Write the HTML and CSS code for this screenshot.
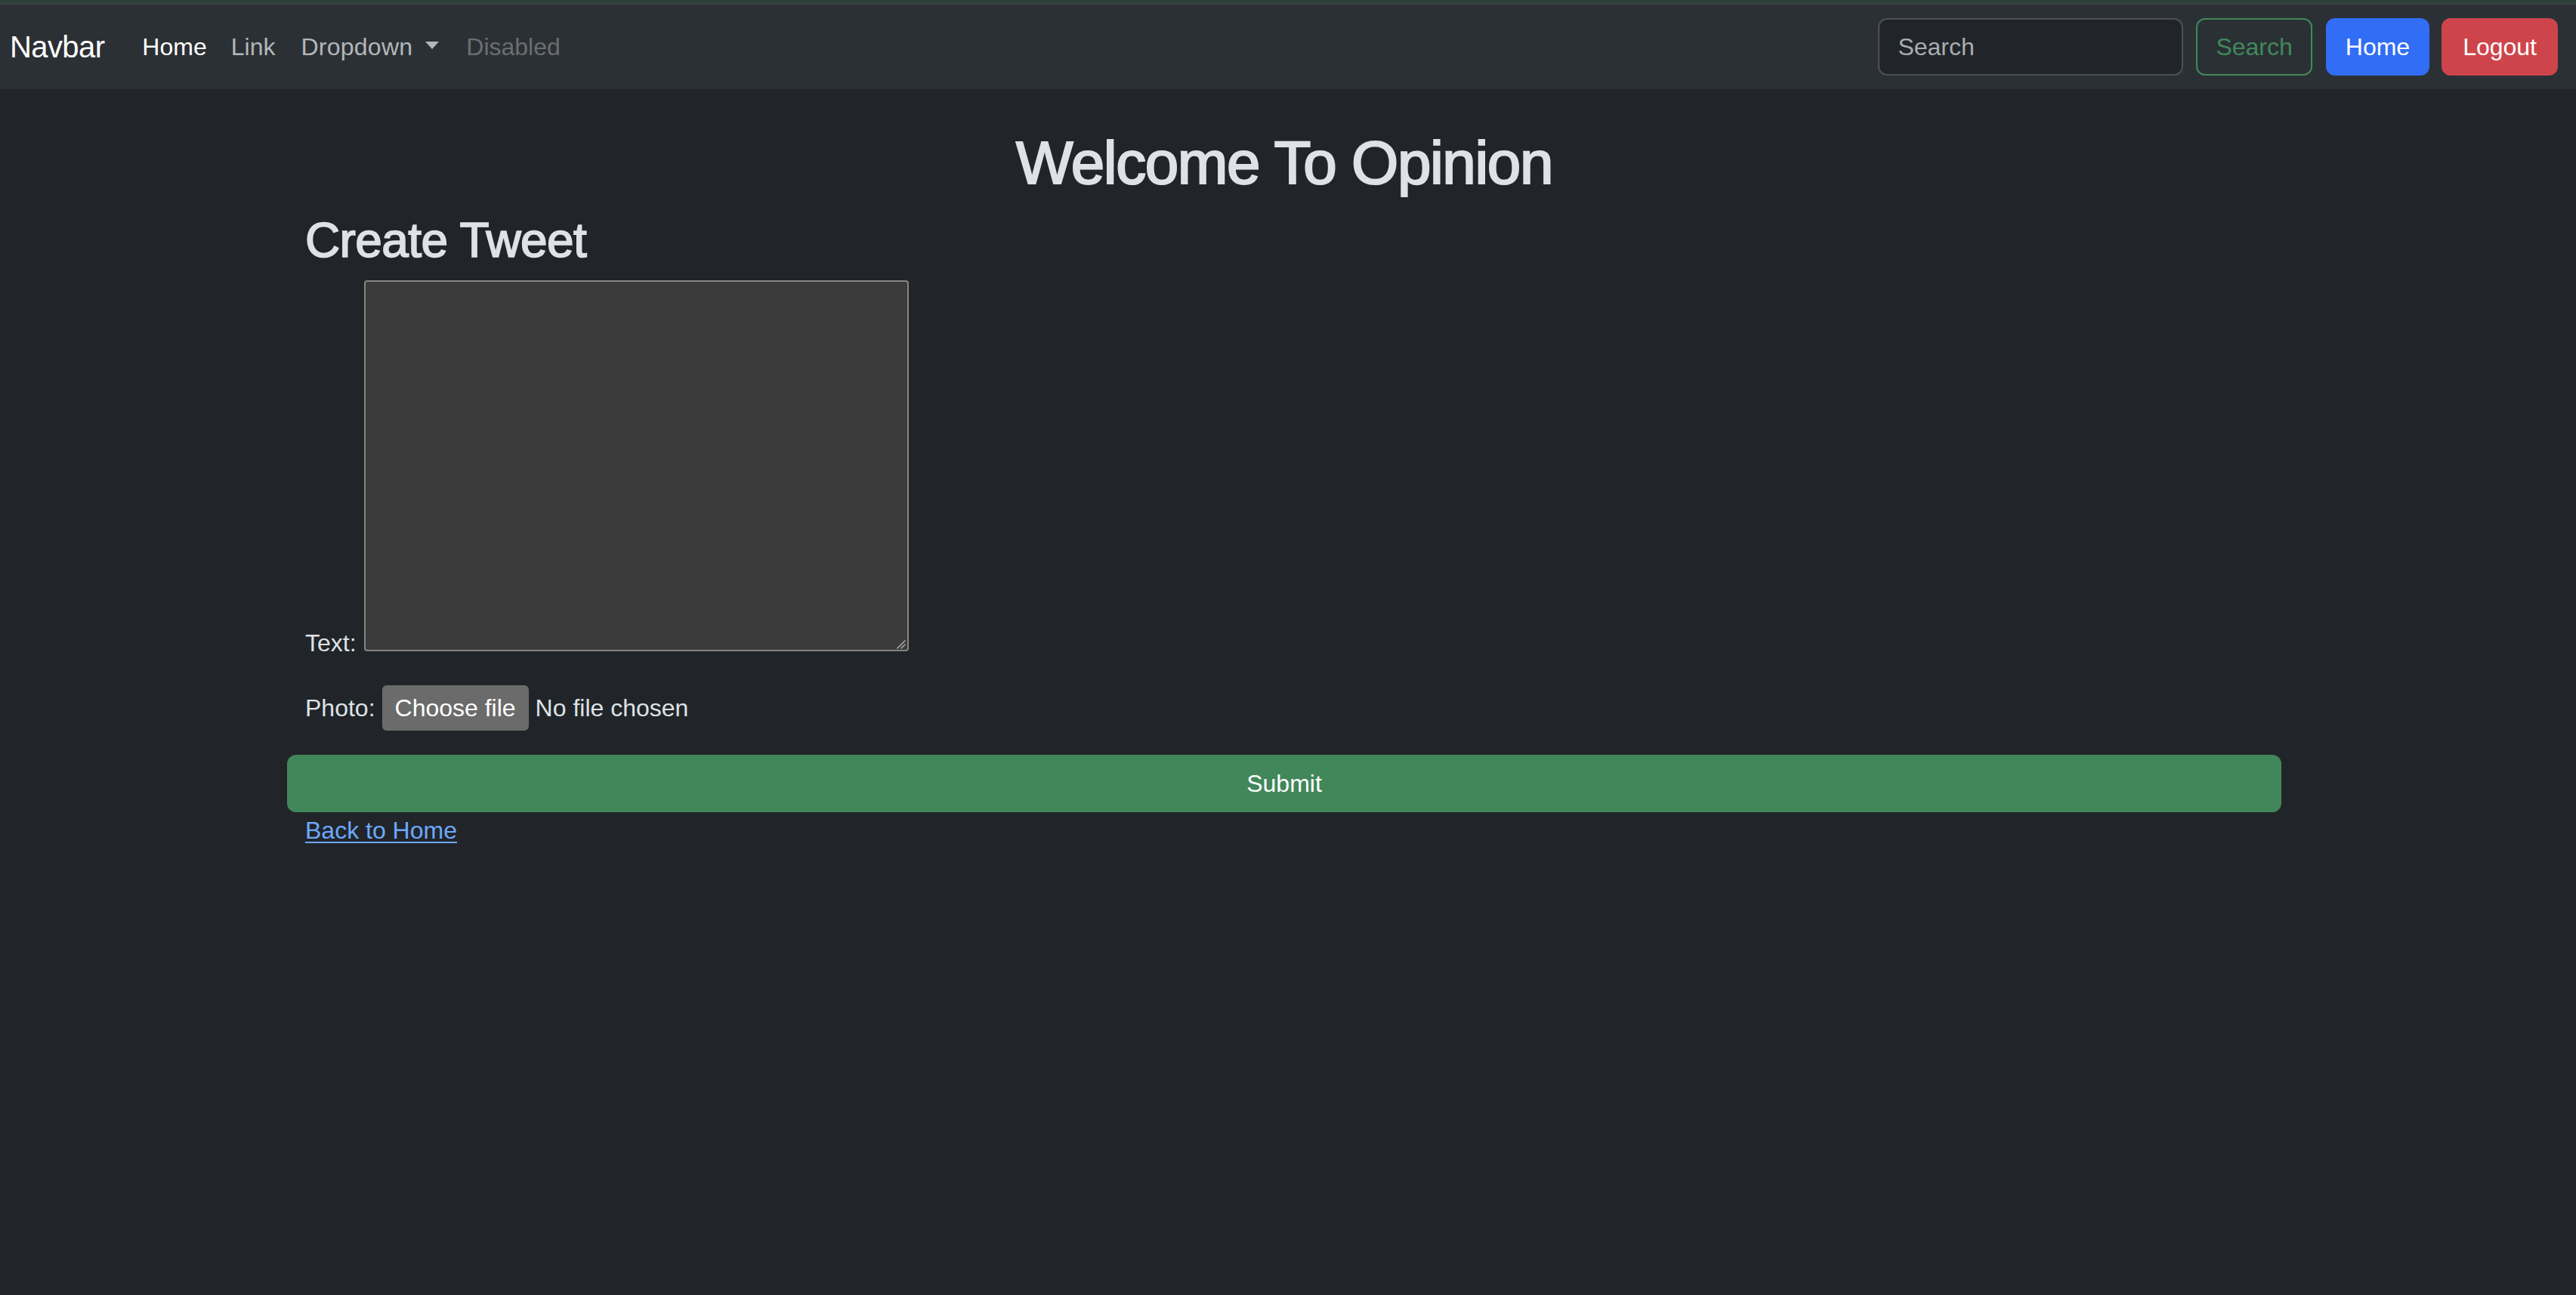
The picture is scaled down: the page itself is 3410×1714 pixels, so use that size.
FILE: index.html
```html
<!DOCTYPE html>
<html lang="en">
<head>
<meta charset="utf-8">
<title>Create Tweet</title>
<link rel="stylesheet" href="styles.css">
</head>
<body>
<div class="topline"></div>
<nav class="navbar">
  <a class="brand" href="#">Navbar</a>
  <ul class="nav">
    <li><a class="nav-link active" href="#">Home</a></li>
    <li><a class="nav-link" href="#">Link</a></li>
    <li><a class="nav-link dd" href="#">Dropdown<span class="caret"></span></a></li>
    <li><span class="nav-link disabled">Disabled</span></li>
  </ul>
  <form class="nav-search">
    <input class="search-input" type="text" placeholder="Search">
    <button class="btn btn-outline-success" type="button">Search</button>
  </form>
  <a class="btn btn-primary" href="#">Home</a>
  <a class="btn btn-danger" href="#">Logout</a>
</nav>
<main class="container">
  <h1 class="title">Welcome To Opinion</h1>
  <h2 class="subtitle">Create Tweet</h2>
  <form class="tweet-form">
    <div class="row-text">
      <label class="field-label">Text:</label>
      <span class="ta-wrap">
        <textarea class="ta"></textarea>
        <svg class="grip" width="14" height="14" viewBox="0 0 14 14"><path d="M13 3 L3 13 M13 8 L8 13" stroke="#a8a8a8" stroke-width="1.6" fill="none" stroke-linecap="round"/></svg>
      </span>
    </div>
    <div class="row-photo">
      <span class="field-label">Photo:</span>
      <span class="file-btn">Choose file</span>
      <span class="file-name">No file chosen</span>
    </div>
    <button class="btn-submit" type="button">Submit</button>
  </form>
  <a class="back" href="#">Back to Home</a>
</main>
</body>
</html>
```

FILE: styles.css
```css
html, body {
  margin: 0;
  padding: 0;
}
body {
  background: #212529;
  color: #dee2e6;
  font-family: "Liberation Sans", Arial, sans-serif;
  font-size: 32px;
  line-height: 48px;
  min-height: 1714px;
}
.topline {
  height: 4px;
  background: #2c403c;
  border-bottom: 2px solid #3e4245;
}
.navbar {
  display: flex;
  align-items: center;
  height: 112px;
  padding: 0 24px 0 13px;
  background: #2b3035;
}
.brand {
  color: #fff;
  font-size: 40px;
  line-height: 60px;
  text-decoration: none;
  margin-right: 34px;
  letter-spacing: -0.6px;
}
.nav {
  display: flex;
  list-style: none;
  margin: 0 auto 0 0;
  padding: 0;
}
.nav-link {
  display: block;
  padding: 16px 16px;
  color: #b4b6b8;
  text-decoration: none;
}
.nav-link.dd { letter-spacing: 0.25px; padding-left: 18px; }
.nav-link.active { color: #fff; }
.nav-link.disabled { color: #6b6e71; padding-left: 20px; }
.caret {
  display: inline-block;
  margin-left: 17px;
  vertical-align: 8px;
  border-top: 10px solid #b4b6b8;
  border-left: 9px solid transparent;
  border-right: 9px solid transparent;
}
.nav-search {
  display: flex;
  margin: 0;
}
.search-input {
  box-sizing: border-box;
  width: 404px;
  height: 76px;
  padding: 12px 24px;
  background: #212529;
  border: 2px solid #4d5154;
  border-radius: 12px;
  color: #dee2e6;
  font-family: inherit;
  font-size: 32px;
  outline: none;
  margin-right: 17px;
}
.search-input::placeholder { color: #a9acb0; }
.btn {
  box-sizing: border-box;
  display: inline-block;
  height: 76px;
  padding: 12px 24px;
  border: 2px solid transparent;
  border-radius: 12px;
  font-family: inherit;
  font-size: 32px;
  line-height: 48px;
  text-decoration: none;
  color: #fff;
  background: transparent;
}
.btn-outline-success {
  color: #41885a;
  border-color: #41885a;
  margin-right: 18px;
}
.btn-primary {
  background: #326ef5;
  border-color: #326ef5;
  margin-right: 16px;
}
.btn-danger {
  background: #cd454b;
  border-color: #cd454b;
  padding: 12px 26px;
}
.container {
  width: 2640px;
  margin: 50px 0 0 calc(50% - 1325px);
}
.title {
  margin: 0 0 16px;
  font-size: 80px;
  line-height: 96px;
  font-weight: 400;
  text-align: center;
  letter-spacing: -1.4px;
  color: #dee2e6;
  -webkit-text-stroke: 2.2px #dee2e6;
}
.subtitle {
  margin: 0 0 15px;
  padding-left: 24px;
  font-size: 64px;
  line-height: 76px;
  font-weight: 400;
  letter-spacing: -0.6px;
  color: #dee2e6;
  -webkit-text-stroke: 1.7px #dee2e6;
}
.tweet-form { margin: 0; }
.row-text {
  display: flex;
  align-items: flex-end;
  padding-left: 24px;
  margin-bottom: 45px;
}
.row-text .field-label {
  line-height: 32px;
  margin: 0 10px -5px 0;
}
.ta-wrap {
  position: relative;
  display: block;
  width: 721px;
  height: 491px;
}
.ta {
  box-sizing: border-box;
  display: block;
  width: 721px;
  height: 491px;
  margin: 0;
  background: #3b3b3b;
  border: 2px solid #858585;
  border-radius: 4px;
  resize: none;
  color: #fff;
  font-family: inherit;
}
.grip {
  position: absolute;
  right: 4px;
  bottom: 3px;
}
.row-photo {
  display: flex;
  align-items: center;
  height: 60px;
  padding-left: 24px;
  margin-bottom: 32px;
}
.file-btn {
  box-sizing: border-box;
  height: 60px;
  line-height: 60px;
  padding: 0 17px;
  margin-left: 9px;
  margin-right: 9px;
  background: #6b6b6b;
  border-radius: 6px;
  color: #fff;
}
.btn-submit {
  display: block;
  width: 100%;
  height: 76px;
  margin: 0;
  padding: 0;
  border: none;
  border-radius: 12px;
  background: #41875a;
  color: #fff;
  font-family: inherit;
  font-size: 32px;
  line-height: 48px;
}
.back {
  display: inline-block;
  margin-left: 24px;
  color: #6ea8fe;
  line-height: 48px;
  text-decoration: underline;
  text-underline-offset: 4px;
  text-decoration-thickness: 2px;
}
```
